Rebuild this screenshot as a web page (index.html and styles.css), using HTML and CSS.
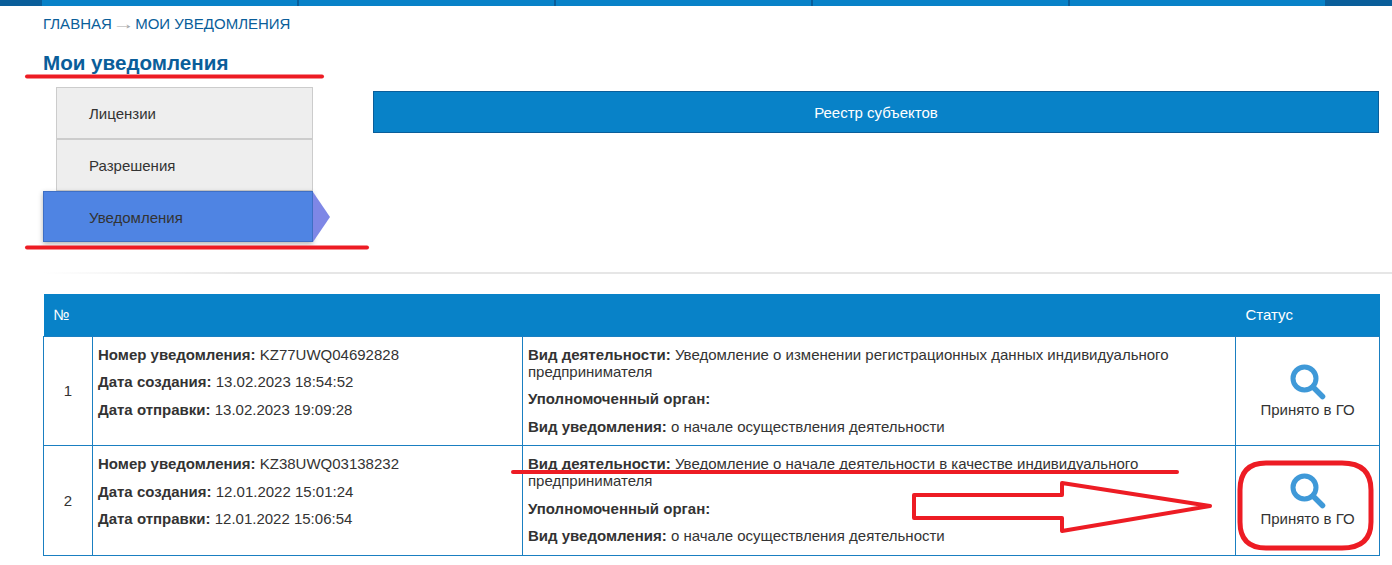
FILE: index.html
```html
<!DOCTYPE html>
<html lang="ru">
<head>
<meta charset="utf-8">
<title>Мои уведомления</title>
<link rel="stylesheet" href="styles.css">
</head>
<body>
<nav class="topbar">
  <span class="seg seg-dark seg-first"></span>
  <span class="seg"></span><span class="seg"></span><span class="seg"></span><span class="seg"></span><span class="seg seg-last"></span>
  <span class="seg seg-dark seg-end"></span>
</nav>
<main class="page">
  <div class="crumbs"><a>ГЛАВНАЯ</a> <span class="arrow">→</span> <a>МОИ УВЕДОМЛЕНИЯ</a></div>
  <h1 class="title">Мои уведомления</h1>
  <section class="top">
    <ul class="tabs">
      <li class="tab">Лицензии</li>
      <li class="tab">Разрешения</li>
      <li class="tab tab-active">Уведомления</li>
    </ul>
    <div class="actions"><a class="btn">Реестр субъектов</a></div>
  </section>
  <hr class="rule">
  <table class="grid">
    <thead>
      <tr><th class="c-num">№</th><th class="c-a"></th><th class="c-b"></th><th class="c-st">Статус</th></tr>
    </thead>
    <tbody>
      <tr class="row-a">
        <td class="num">1</td>
        <td class="info">
          <p><b>Номер уведомления:</b> KZ77UWQ04692828</p>
          <p><b>Дата создания:</b> 13.02.2023 18:54:52</p>
          <p><b>Дата отправки:</b> 13.02.2023 19:09:28</p>
        </td>
        <td class="info">
          <p><b>Вид деятельности:</b> Уведомление о изменении регистрационных данных индивидуального предпринимателя</p>
          <p><b>Уполномоченный орган:</b></p>
          <p><b>Вид уведомления:</b> о начале осуществления деятельности</p>
        </td>
        <td class="status">
          <svg class="lens" viewBox="0 0 36 36" width="36" height="36"><circle cx="14.5" cy="14.5" r="11.5" fill="none" stroke="#3f99d8" stroke-width="5"/><path d="M23 23L32.5 32.5" stroke="#3f99d8" stroke-width="5.5" stroke-linecap="round"/></svg>
          <div>Принято в ГО</div>
        </td>
      </tr>
      <tr class="row-b">
        <td class="num">2</td>
        <td class="info">
          <p><b>Номер уведомления:</b> KZ38UWQ03138232</p>
          <p><b>Дата создания:</b> 12.01.2022 15:01:24</p>
          <p><b>Дата отправки:</b> 12.01.2022 15:06:54</p>
        </td>
        <td class="info">
          <p><b>Вид деятельности:</b> Уведомление о начале деятельности в качестве индивидуального предпринимателя</p>
          <p><b>Уполномоченный орган:</b></p>
          <p><b>Вид уведомления:</b> о начале осуществления деятельности</p>
        </td>
        <td class="status">
          <svg class="lens" viewBox="0 0 36 36" width="36" height="36"><circle cx="14.5" cy="14.5" r="11.5" fill="none" stroke="#3f99d8" stroke-width="5"/><path d="M23 23L32.5 32.5" stroke="#3f99d8" stroke-width="5.5" stroke-linecap="round"/></svg>
          <div>Принято в ГО</div>
        </td>
      </tr>
    </tbody>
  </table>
</main>
<svg class="marks" width="1392" height="565" viewBox="0 0 1392 565">
  <g fill="none" stroke="#ed1c24" stroke-linecap="round" stroke-linejoin="round">
    <path d="M27 76.5H322" stroke-width="4"/>
    <path d="M27 247.5H367" stroke-width="4"/>
    <path d="M513 472H1177" stroke-width="4"/>
    <path d="M1062 483L1210 506L1062 531V518H914V495H1062Z" stroke-width="4"/>
    <path d="M1266 463H1342Q1371 463 1371 490V522Q1371 548 1342 548H1266Q1240 548 1240 522V490Q1240 463 1266 463Z" stroke-width="5"/>
  </g>
</svg>
</body>
</html>
```

FILE: styles.css
```css
* { box-sizing: border-box; }
html, body { margin: 0; padding: 0; }
body {
  position: relative;
  width: 1392px;
  height: 565px;
  overflow: hidden;
  background: #fff;
  font-family: "Liberation Sans", Arial, sans-serif;
  font-size: 15px;
  color: #333;
}
.topbar { display: flex; height: 6px; background: #0882c8; }
.seg { width: 257px; border-right: 2px solid #0a5e9a; }
.seg-last { border-right: 0; width: 255px; }
.seg-dark { background: #0a5e9a; border: 0; }
.seg-first { width: 42px; }
.seg-end { flex: 1; width: auto; }
.page { padding: 0 13px 0 43px; }
.crumbs { margin-top: 10px; line-height: 16px; color: #0a5e9a; text-transform: uppercase; }
.arrow { display: inline-block; color: #aaa; transform: scaleX(1.5); }
.title { margin: 19px 0 0; font-size: 20.6px; line-height: 23px; font-weight: 700; color: #0a5e9a; }
.top { display: flex; margin-top: 13px; height: 154px; }
.tabs { list-style: none; margin: 0; padding: 0; width: 270px; flex: none; }
.tab {
  margin-left: 13px;
  height: 52px;
  padding-left: 32px;
  line-height: 52px;
  background: #eee;
  border: 1px solid #ccc;
  color: #333;
}
.tab-active {
  position: relative;
  margin-left: 0;
  height: 51px;
  padding-left: 45px;
  line-height: 51px;
  background: #4f84e3;
  border-color: #3f6fc4;
  box-shadow: 0 2px 5px rgba(0, 0, 0, .3);
}
.tab-active::after {
  content: "";
  position: absolute;
  left: 269px;
  top: 0;
  border-left: 17px solid #7e87e6;
  border-top: 25px solid transparent;
  border-bottom: 25px solid transparent;
}
.actions { flex: 1; padding: 4px 0 0 60px; }
.btn {
  display: block;
  height: 42px;
  line-height: 42px;
  text-align: center;
  color: #fff;
  background: #0882c8;
  border: 1px solid #0a5e9a;
}
.rule {
  margin: 31px -13px 0 0;
  height: 2px;
  border: 0;
  background: linear-gradient(to right, #fff, #e6e6e6 15%, #e6e6e6);
}
.grid {
  width: 1337px;
  margin-top: 20px;
  table-layout: fixed;
  border-collapse: collapse;
  line-height: 17px;
}
.grid th {
  height: 42px;
  padding: 0 10px;
  background: #0882c8;
  color: #fff;
  font-weight: 400;
  text-align: left;
}
.c-num { width: 49px; }
.c-a { width: 430px; }
.c-b { width: 713px; }
.grid td { border: 1px solid #1a7fc1; vertical-align: top; }
.num { text-align: center; vertical-align: middle !important; }
.info { padding: 9px 5px 0; }
.info p { margin: 0 0 10.5px; }
.row-a { height: 109px; }
.row-b { height: 110px; }
.status { text-align: center; padding-top: 27px; color: #333; }
.lens { display: block; margin: 0 auto 1px; }
.marks { position: absolute; left: 0; top: 0; pointer-events: none; }
```
